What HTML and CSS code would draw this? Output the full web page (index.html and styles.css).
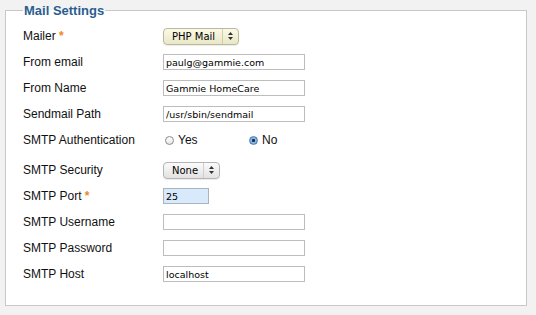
FILE: index.html
```html
<!DOCTYPE html>
<html lang="en">
<head>
    <meta charset="UTF-8">
    <title>Mail Settings</title>
    <link rel="stylesheet" href="styles.css">
</head>
<body>
    <fieldset class="settings">
        <legend>Mail Settings</legend>

        <div class="row">
            <label class="label">Mailer <span class="req">*</span></label>
            <div class="select select-yellow mailer">
                <span class="select-text">PHP Mail</span>
                <span class="select-arrows">
                    <svg width="5" height="8" viewBox="0 0 5 8"><path d="M2.5 0L5 3H0z M2.5 8L0 5h5z" fill="#333"/></svg>
                </span>
            </div>
        </div>

        <div class="row">
            <label class="label">From email</label>
            <input class="text" type="text" value="paulg@gammie.com">
        </div>

        <div class="row">
            <label class="label">From Name</label>
            <input class="text" type="text" value="Gammie HomeCare">
        </div>

        <div class="row">
            <label class="label">Sendmail Path</label>
            <input class="text" type="text" value="/usr/sbin/sendmail">
        </div>

        <div class="row">
            <label class="label">SMTP Authentication</label>
            <div class="radios">
                <span class="option yes"><span class="radio"></span>Yes</span>
                <span class="option"><span class="radio checked"></span>No</span>
            </div>
        </div>

        <div class="row row-security">
            <label class="label">SMTP Security</label>
            <div class="select security">
                <span class="select-text">None</span>
                <span class="select-arrows">
                    <svg width="5" height="8" viewBox="0 0 5 8"><path d="M2.5 0L5 3H0z M2.5 8L0 5h5z" fill="#333"/></svg>
                </span>
            </div>
        </div>

        <div class="row">
            <label class="label">SMTP Port <span class="req">*</span></label>
            <input class="text port" type="text" value="25">
        </div>

        <div class="row">
            <label class="label">SMTP Username</label>
            <input class="text" type="text" value="">
        </div>

        <div class="row">
            <label class="label">SMTP Password</label>
            <input class="text" type="password" value="">
        </div>

        <div class="row">
            <label class="label">SMTP Host</label>
            <input class="text" type="text" value="localhost">
        </div>
    </fieldset>
</body>
</html>
```

FILE: styles.css
```css
body {
    margin: 0;
    background: #f2f2f2;
    font-family: 'Liberation Sans', Arial, sans-serif;
    color: #111;
}
.settings {
    margin: 3px 9px 0 5px;
    padding: 5px 17px 18px 17px;
    border: 1px solid #c8c8c8;
    background: #fff;
}
.settings legend {
    padding: 0 1px;
    font-size: 13px;
    line-height: 15px;
    font-weight: 700;
    color: #2b5d8f;
}
.row {
    display: grid;
    grid-template-columns: 140px 1fr;
    align-items: center;
    height: 26px;
}
.row-security {
    margin-top: 4px;
}
.label {
    font-size: 12px;
}
.req {
    color: #f0861e;
    font-weight: 700;
    font-size: 12px;
}
.text {
    box-sizing: border-box;
    width: 142px;
    height: 16px;
    margin: 0;
    padding: 0 2px;
    border: 1px solid #bdbdbd;
    border-radius: 0;
    background: #fff;
    font-family: 'DejaVu Sans', sans-serif;
    font-size: 9.5px;
    color: #000;
    outline: none;
}
.text.port {
    width: 46px;
    background: #d7e9fb;
    border-color: #a9b3bd;
}
.select {
    box-sizing: border-box;
    display: flex;
    align-items: stretch;
    height: 17px;
    border: 1px solid #b4b4b4;
    border-radius: 4px;
    background: linear-gradient(#fbfbfb, #e2e2e2);
    font-family: 'DejaVu Sans', sans-serif;
    font-size: 10px;
    color: #000;
    box-shadow: 0 1px 1px rgba(0, 0, 0, 0.08);
}
.select-yellow {
    border-color: #bcb99a;
    background: linear-gradient(#fbfae8, #e9e7c6);
}
.select-text {
    display: flex;
    align-items: center;
    padding-left: 8px;
    flex: 1;
}
.select-arrows {
    display: flex;
    align-items: center;
    justify-content: center;
    width: 15px;
    border-left: 1px solid #cfcfcf;
}
.select-yellow .select-arrows {
    border-left-color: #d2cfae;
}
.mailer {
    width: 76px;
}
.security {
    width: 57px;
}
.radios {
    display: flex;
    align-items: center;
    font-size: 12px;
    padding-left: 2px;
}
.option {
    display: flex;
    align-items: center;
    gap: 4px;
}
.option.yes {
    width: 84px;
}
.radio {
    box-sizing: border-box;
    width: 9px;
    height: 9px;
    border-radius: 50%;
    border: 1px solid #8a8a8a;
    background: linear-gradient(#fff, #e6e6e6);
}
.radio.checked {
    border-color: #4d7fb3;
    background: radial-gradient(circle, #1d2f45 0, #1d2f45 1.3px, #8fbbe6 1.8px, #5f95cc 100%);
}
```
